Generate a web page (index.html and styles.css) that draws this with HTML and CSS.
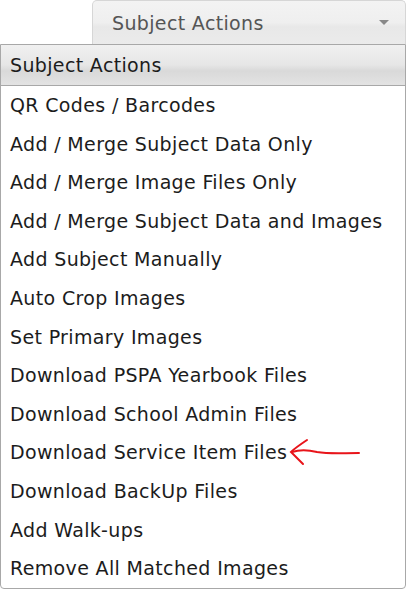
FILE: index.html
```html
<!DOCTYPE html>
<html>

<head>
    <title>Subject Actions</title>
    <link rel="stylesheet" href="styles.css">
</head>

<body>
    <div class="actions">
        <div class="select-btn">
            <span>Subject Actions</span>
            <span class="caret"></span>
        </div>
        <div class="menu">
            <div class="menu-head">Subject Actions</div>
            <ul class="menu-list">
                <li>QR Codes / Barcodes</li>
                <li>Add / Merge Subject Data Only</li>
                <li>Add / Merge Image Files Only</li>
                <li>Add / Merge Subject Data and Images</li>
                <li>Add Subject Manually</li>
                <li>Auto Crop Images</li>
                <li>Set Primary Images</li>
                <li>Download PSPA Yearbook Files</li>
                <li>Download School Admin Files</li>
                <li class="marked">Download Service Item Files
                    <svg class="pointer" width="72" height="28" viewBox="0 0 72 28">
                        <path d="M18 2 C12 6 6 10 2 14 C6 18 10 22 14 26" fill="none" stroke="#e8141a" stroke-width="2" stroke-linecap="round" />
                        <path d="M3 14 C12 11 20 12 28 14 C40 16 52 15 70 15" fill="none" stroke="#e8141a" stroke-width="2" stroke-linecap="round" />
                    </svg>
                </li>
                <li>Download BackUp Files</li>
                <li>Add Walk-ups</li>
                <li>Remove All Matched Images</li>
            </ul>
        </div>
    </div>
</body>

</html>
```

FILE: styles.css
```css
body {
    margin: 0;
    font-family: "DejaVu Sans", Verdana, sans-serif;
    letter-spacing: 0.35px;
    background-color: #fff;
}

.actions {
    width: 406px;
}

.select-btn {
    margin-left: 92px;
    height: 43px;
    border: 1px solid #d6d6d6;
    border-bottom: none;
    border-radius: 5px 5px 0 0;
    background: linear-gradient(#f3f3f3 0%, #efefef 50%, #e8e8e8 60%, #ebebeb 100%);
    display: flex;
    align-items: center;
    justify-content: space-between;
    padding: 0 16px 0 19px;
    color: #555;
    font-size: 19px;
}

.caret {
    width: 0;
    height: 0;
    border-left: 5px solid transparent;
    border-right: 5px solid transparent;
    border-top: 5px solid #888;
}

.menu {
    border: 1px solid #a8a8a8;
    border-radius: 0 0 4px 4px;
    color: #1c1c1c;
    font-size: 19px;
}

.menu-head {
    height: 40px;
    line-height: 40px;
    padding-left: 9px;
    border-bottom: 1px solid #a8a8a8;
    background: linear-gradient(#f0f0f0 0%, #e6e6e6 50%, #d9d9d9 65%, #e3e3e3 100%);
}

.menu-list {
    list-style-type: none;
    margin: 0;
    padding: 0;
}

.menu-list li {
    line-height: 38.6px;
    padding-left: 9px;
    white-space: nowrap;
}

.marked {
    position: relative;
}

.pointer {
    position: absolute;
    left: 288px;
    top: 5px;
}
```
